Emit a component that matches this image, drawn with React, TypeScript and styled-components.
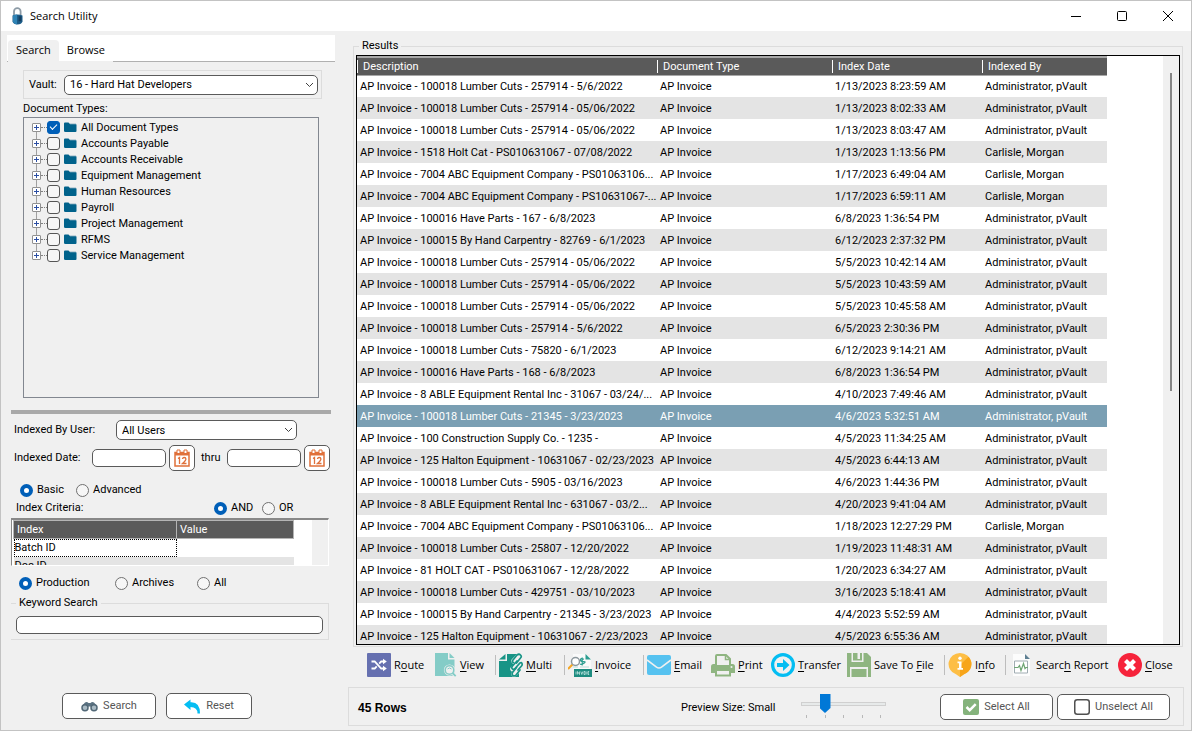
import React from "react";
import styled, { createGlobalStyle, css } from "styled-components";

const GlobalStyle = createGlobalStyle`
  *, *::before, *::after { box-sizing: border-box; }
  body {
    margin: 0;
    background: #f0f0f0;
    color: #000;
    font: 11px/16px Roboto, "Liberation Sans", sans-serif;
  }
  button, input, select { font: inherit; color: inherit; margin: 0; }
`;

const line = "#dcdcdc";
const ink = "#5a5a5a";

const Window = styled.div`
  display: flex;
  flex-direction: column;
  height: 100vh;
  min-height: 600px;
  min-width: 1100px;
  border: 1px solid #c3c3c3;
  background: #f0f0f0;
  overflow: hidden;
`;

const TitleBar = styled.header`
  display: flex;
  align-items: center;
  flex: none;
  height: 30px;
  padding-left: 9px;
  background: #fff;
`;

const Title = styled.h1`
  flex: 1;
  margin: 0 0 0 5px;
  font: 11px/16px "Open Sans", "Noto Sans", sans-serif;
`;

const CaptionButton = styled.button`
  display: grid;
  place-items: center;
  width: 46px;
  height: 30px;
  padding: 0;
  border: 0;
  background: transparent;
`;

const Body = styled.main`
  display: flex;
  flex: 1;
  min-height: 0;
  padding: 4px 7px 4px 6px;
  gap: 13px;
`;

const Sidebar = styled.form`
  display: flex;
  flex-direction: column;
  flex: none;
  width: 328px;
`;

const Tabs = styled.nav`
  display: flex;
  align-items: flex-end;
  flex: none;
  height: 27px;
  padding-left: 1px;
  background: #fff;
  border-bottom: 1px solid #b0b0b0;
`;

const Tab = styled.button<{ $active?: boolean }>`
  height: 22px;
  padding: 0 8px 2px;
  margin-bottom: -1px;
  border: 0;
  border-bottom: 1px solid #f0f0f0;
  border-radius: 4px 4px 0 0;
  background: ${(p) => (p.$active ? "#f0f0f0" : "#fff")};
  font: 11px/16px "Open Sans", "Noto Sans", sans-serif;
`;

const TypesArea = styled.section`
  display: flex;
  flex-direction: column;
  flex: 1;
  min-height: 0;
  padding: 8px 13px 12px 16px;
`;

const VaultBox = styled.div`
  display: flex;
  align-items: center;
  gap: 8px;
  flex: none;
  height: 29px;
  padding: 0 3px 0 5px;
  margin-bottom: 2px;
  border: 1px solid ${line};
`;

const TreeLabel = styled.h2`
  margin: 0;
  font: inherit;
`;

const Tree = styled.ul`
  flex: 1;
  min-height: 0;
  margin: 0 3px 0 0;
  padding: 1px 0 0 8px;
  border: 1px solid #828790;
  list-style: none;
  overflow: hidden;
`;

const TreeRow = styled.li`
  display: flex;
  align-items: center;
  height: 16px;
  background: linear-gradient(#a0a0a0, #a0a0a0) 4px 0 / 1px 100% no-repeat;
  &:first-child { background-position: 4px 8px; }
  &:last-child { background-size: 1px 8px; }
`;

const Expander = styled.button`
  display: grid;
  place-items: center;
  width: 9px;
  height: 9px;
  padding: 0;
  border: 1px solid #919191;
  border-radius: 1px;
  background: #fff;
`;

const Dots = styled.span`
  width: 6px;
  border-top: 1px dotted #808080;
`;

const TreeItemLabel = styled.label`
  display: flex;
  align-items: center;
  gap: 4px;
  height: 16px;
`;

const TreeText = styled.span`
  padding-top: 2px;
`;

const Check = styled.input`
  appearance: none;
  display: grid;
  place-items: center;
  width: 13px;
  height: 13px;
  border: 1px solid #555;
  border-radius: 3px;
  background: #f6f6f6;
  &:checked { background: #005fb8; border-color: #005fb8; }
  &:checked::after {
    content: "";
    width: 7px;
    height: 4px;
    border: solid #fff;
    border-width: 0 0 1px 1px;
    transform: translateY(-1px) rotate(-45deg);
  }
`;

const Splitter = styled.hr`
  flex: none;
  width: 320px;
  height: 4px;
  margin: 0 0 6px 4px;
  border: 0;
  background: #a9a9a9;
`;

const Filters = styled.section`
  display: flex;
  flex-direction: column;
  flex: none;
  padding: 0 6px 0 4px;
`;

const FieldRow = styled.div<{ $gap?: number }>`
  display: flex;
  align-items: center;
  padding-left: 3px;
  margin-bottom: ${(p) => p.$gap ?? 0}px;
`;

const FieldLabel = styled.label<{ $w?: number }>`
  flex: none;
  width: ${(p) => (p.$w ? p.$w + "px" : "auto")};
  white-space: nowrap;
`;

const SelectWrap = styled.span<{ $w?: number }>`
  display: grid;
  align-items: center;
  ${(p) => (p.$w ? css`width: ${p.$w}px;` : css`flex: 1;`)}
  & > * { grid-area: 1 / 1; }
  & > svg { justify-self: end; margin-right: 4px; pointer-events: none; }
`;

const Select = styled.select`
  appearance: none;
  width: 100%;
  height: 20px;
  padding: 1px 16px 0 5px;
  border: 1px solid ${ink};
  border-radius: 5px;
  background: #fff;
`;

const TextBox = styled.input<{ $w?: number }>`
  display: block;
  flex: none;
  width: ${(p) => (p.$w ? p.$w + "px" : "100%")};
  height: 18px;
  padding: 0 5px;
  border: 1px solid ${ink};
  border-radius: 5px;
  background: #fff;
`;

const DateButton = styled.button`
  display: grid;
  place-items: center;
  flex: none;
  width: 26px;
  height: 26px;
  margin-left: 3px;
  padding: 0;
  border: 1px solid ${ink};
  border-radius: 5px;
  background: #fff;
`;

const Thru = styled.span`
  flex: none;
  width: 32px;
  padding-left: 6px;
`;

const RadioLabel = styled.label<{ $w?: number }>`
  display: flex;
  align-items: center;
  gap: 4px;
  flex: none;
  width: ${(p) => (p.$w ? p.$w + "px" : "auto")};
`;

const Radio = styled.input`
  appearance: none;
  width: 13px;
  height: 13px;
  border: 1px solid #707070;
  border-radius: 50%;
  background: #f6f6f6;
  &:checked { border: 4px solid #005fb8; background: #fff; }
`;

const RadioRow = styled.div<{ $indent: number; $gap: number }>`
  display: flex;
  align-items: center;
  height: 16px;
  padding-left: ${(p) => p.$indent}px;
  margin-bottom: ${(p) => p.$gap}px;
`;

const Criteria = styled.div`
  display: flex;
  height: 48px;
  margin-bottom: 9px;
  padding: 0 0 0 1px;
  border: 1px solid #fff;
  border-top: 2px solid #888;
  border-left-color: #888;
  background: #fff;
  overflow: hidden;
`;

const CriteriaTable = styled.table`
  align-self: flex-start;
  width: 281px;
  flex: none;
  table-layout: fixed;
  border-collapse: collapse;
  th {
    height: 18px;
    padding: 0 3px;
    background: ${ink};
    color: #fff;
    border: 1px solid #b4b4b4;
    font-weight: normal;
    text-align: left;
    line-height: 16px;
  }
  td { height: 18px; padding: 0 1px; }
  tr:nth-child(even) td { background: #e4e4e4; }
  td.focused { outline: 1px dotted #000; outline-offset: -1px; }
`;

const CriteriaTrack = styled.div`
  width: 16px;
  margin-left: auto;
  background: #f0f0f0;
`;

const GroupBox = styled.fieldset`
  min-width: 0;
  margin: 0;
  border: 1px solid ${line};
  legend {
    padding: 0 3px;
    line-height: 14px;
  }
`;

const KeywordBox = styled(GroupBox)`
  height: 44px;
  padding: 6px 5px 0;
  border-left: 0;
`;

const FormButtons = styled.div`
  display: flex;
  flex: none;
  gap: 10px;
  margin: 53px 0 7px 55px;
`;

const Button = styled.button<{ $w: number }>`
  display: flex;
  align-items: center;
  justify-content: center;
  gap: 5px;
  width: ${(p) => p.$w}px;
  height: 26px;
  padding: 0;
  border: 1px solid ${ink};
  border-radius: 5px;
  background: #fff;
  color: #555;
  line-height: 18px;
`;

const Content = styled.section`
  display: flex;
  flex-direction: column;
  flex: 1;
  min-width: 0;
`;

const ResultsBox = styled(GroupBox)`
  display: flex;
  flex: 1;
  min-height: 0;
  margin: 4px 1px 0 5px;
  padding: 2px 2px 1px;
  legend { margin-left: 3px; }
`;

const ResultsFrame = styled.div`
  display: flex;
  flex: 1;
  height: 100%;
  min-height: 0;
  border: 1px solid #000;
  background: #fff;
  overflow: hidden;
`;

const ResultsScroll = styled.div`
  flex: 1;
  min-width: 0;
  overflow: hidden;
`;

const ResultsTable = styled.table`
  width: 750px;
  table-layout: fixed;
  border-collapse: collapse;
  th {
    height: 18px;
    padding: 0;
    border-top: 2px solid #a8a8a8;
    border-bottom: 1px solid #a8a8a8;
    background: ${ink};
    color: #fff;
    font-weight: normal;
    text-align: left;
    line-height: 13px;
  }
  th span {
    display: block;
    padding-left: 5px;
    border-left: 1px solid #fff;
  }
  td {
    height: 22px;
    padding: 2px 0 0 3px;
    white-space: nowrap;
    overflow: hidden;
  }
`;

const ResultRow = styled.tr<{ $selected?: boolean }>`
  &:nth-child(even) { background: #e4e4e4; }
  ${(p) => p.$selected && css`&&& { background: #7a9fb3; color: #fff; }`}
`;

const ScrollTrack = styled.div`
  flex: none;
  width: 16px;
  padding: 17px 0 0 7px;
  background: #f0f0f0;
`;

const ScrollThumb = styled.div`
  width: 2px;
  height: 318px;
  background: #858585;
`;

const Toolbar = styled.div`
  display: flex;
  flex: none;
  align-items: center;
  height: 24px;
  margin: 6px 0 10px;
  padding-left: 19px;
`;

const Tool = styled.button<{ $w: number; $gap?: number }>`
  display: flex;
  align-items: center;
  gap: ${(p) => p.$gap ?? 3}px;
  flex: none;
  width: ${(p) => p.$w}px;
  height: 24px;
  padding: 0;
  border: 0;
  background: transparent;
  font: 11px/16px "Open Sans", "Noto Sans", sans-serif;
  white-space: nowrap;
  u { text-underline-offset: 2px; }
`;

const Separator = styled.span`
  width: 1px;
  height: 20px;
  margin-right: 3px;
  background: #bdbdbd;
`;

const StatusBar = styled.footer`
  display: flex;
  flex: none;
  align-items: center;
  height: 39px;
  padding: 0 13px 0 9px;
  border: 1px solid ${line};
`;

const RowCount = styled.strong`
  width: 323px;
  padding-top: 2px;
  font: bold 12px/16px "Liberation Sans", Arial, sans-serif;
`;

const PreviewLabel = styled.label`
  width: 120px;
  padding-top: 2px;
`;

const SliderBox = styled.div`
  width: 85px;
  height: 26px;
`;

const Slider = styled.input`
  appearance: none;
  display: block;
  width: 85px;
  height: 20px;
  background: linear-gradient(#e7eaea, #e7eaea) 1px 9px / 83px 2px no-repeat,
    linear-gradient(#d0d0d0, #d0d0d0) 0 8px / 85px 4px no-repeat;
  &::-webkit-slider-thumb {
    appearance: none;
    width: 11px;
    height: 19px;
    background: #0078d7;
    clip-path: polygon(0 0, 100% 0, 100% 74%, 50% 100%, 0 74%);
  }
`;

const Ticks = styled.div`
  display: flex;
  justify-content: space-between;
  padding: 0 5px;
  margin-top: 1px;
  span { width: 1px; height: 3px; background: #b8b8b8; }
`;

const StatusButtons = styled.div`
  display: flex;
  gap: 4px;
  margin-left: auto;
`;

const Chevron = () => (
  <svg width="9" height="6" viewBox="0 0 9 6" fill="none" stroke="#404040">
    <path d="M1 1l3.5 3.5L8 1" />
  </svg>
);

const LockIcon = () => (
  <svg width="15" height="18" viewBox="0 0 15 18">
    <path d="M4 9V4.5a3.3 3.3 0 0 1 6.6 0V9" fill="none" stroke="#8d9ba6" strokeWidth="1.8" />
    <path d="M2.5 8.5q5-2 10 0v6q-1 3-5 3t-5-3z" fill="#1d5c88" />
    <path d="M3 8.6q2-1 4-1v9.8q-3 0-4-2.4z" fill="#2f83b5" />
    <path d="M8.6 9.2h2.8v5H8.6z" fill="#143f61" />
  </svg>
);

const PlusIcon = () => (
  <svg width="5" height="5" viewBox="0 0 5 5" stroke="#2b4ea3">
    <path d="M0 2.5h5M2.5 0v5" />
  </svg>
);

const FolderIcon = () => (
  <svg width="13" height="11" viewBox="0 0 13 11">
    <path d="M0 1.5Q0 .5 1 .5h3.500L6 2h5.500q1 0 1 1v6q0 1-1 1h-10q-1.500 0-1.500-1z" fill="#00628b" />
    <path d="M6 2h6" stroke="#7ba5b9" strokeWidth=".8" />
  </svg>
);

const CalendarIcon = () => (
  <svg width="16" height="18" viewBox="0 0 16 18">
    <path d="M1 3.500h14v13.500H1z" fill="#fff" stroke="#e0703a" strokeWidth="1.500" />
    <path d="M1 3h14v3.500H1z" fill="#e0703a" />
    <path d="M3 1h3v3.500H3zM10 1h3v3.500h-3z" fill="#fff" stroke="#e0703a" />
    <path d="M4 9.500l1.500-1V15M8.500 10q0-1.500 1.700-1.500t1.700 1.500-3.400 4.500H12.500" fill="none" stroke="#e0703a" strokeWidth="1.300" />
  </svg>
);

const BinocularsIcon = () => (
  <svg width="17" height="11" viewBox="0 0 17 11">
    <path d="M1 5L4 1.500q2-1 3.500.5h2q1.500-1.500 3.500-.5L16 5l-4 2.500-2.500-2h-2l-2.500 2z" fill="#5b7282" />
    <circle cx="4" cy="6.800" r="3" fill="#a9bac4" stroke="#526877" strokeWidth="1.500" />
    <circle cx="13" cy="6.800" r="3" fill="#a9bac4" stroke="#526877" strokeWidth="1.500" />
  </svg>
);

const ResetIcon = () => (
  <svg width="17" height="15" viewBox="0 0 17 15">
    <path d="M0 5.500L6.500.5v2.700Q16 2.500 16 14.500h-2.500Q13.500 8 6.500 8v3z" fill="#04bdf2" />
  </svg>
);

const RouteIcon = () => (
  <svg width="24" height="24" viewBox="0 0 24 24">
    <rect width="24" height="24" rx="1" fill="#6670b0" />
    <g fill="none" stroke="#fff" strokeWidth="1.800">
      <path d="M4.500 8.500h3.200l6.500 7H17M4.500 15.500h3.200l2-2.200M12.200 10.600l2-2.100H17" />
    </g>
    <path d="M16 5.800l3.800 2.700L16 11.200zM16 12.800l3.800 2.700-3.800 2.700z" fill="#fff" />
  </svg>
);

const ViewIcon = () => (
  <svg width="24" height="24" viewBox="0 0 24 24">
    <path d="M0 0h13v6.500h6.500V23H0z" fill="#84ccc7" />
    <path d="M14.500 0L19.500 5h-5z" fill="#84ccc7" />
    <circle cx="14.500" cy="17" r="5.600" fill="#f0f0f0" />
    <path d="M17 19.500l3.500 3.500" stroke="#f0f0f0" strokeWidth="3.500" />
    <circle cx="14.500" cy="17" r="4.300" fill="none" stroke="#84ccc7" strokeWidth="1.600" />
    <path d="M17.500 20l3.200 3.200" stroke="#84ccc7" strokeWidth="1.800" />
    <path d="M12.500 16q2-2 4 0" fill="none" stroke="#84ccc7" />
  </svg>
);

const MultiIcon = () => (
  <svg width="24" height="24" viewBox="0 0 24 24">
    <path d="M8 1h12v23H0V8h8z" fill="#189486" />
    <path d="M6.500 1v5.500H0z" fill="#189486" />
    <path d="M20 3l-5 5M20 10l-6 6M20 16l-5 5" stroke="#f0f0f0" strokeWidth="5.500" strokeLinecap="round" />
    <g fill="none" stroke="#189486" strokeWidth="1.700" strokeLinecap="round">
      <path d="M14.500 9.500q-2-.5-.5-2.500l4-5q2-1.500 3.500 0t0 3l-4 5" />
      <path d="M18 8l-4.500 5q-1.500 2 0 3t3-1l4.500-5q1.500-1 2 .5t-.5 2.500l-3.500 4" />
      <path d="M17.500 14.500l-4 5q-1 2 .5 3t3-.5l4-5" />
    </g>
  </svg>
);

const InvoiceIcon = () => (
  <svg width="24" height="24" viewBox="0 0 24 24">
    <path d="M5 1h12l6 5v10H5z" fill="#fafafa" />
    <path d="M17.500 1L23 6.500h-5.500z" fill="#2c9d90" />
    <path d="M6 16h18v8H6z" fill="#1d8c80" />
    <path d="M8 18.500v3M9.500 21.500v-3l2 3v-3M12.800 18.500l1 3 1-3M16 18.500v3h1.200v-3zM18.800 18.500v3M20 18.500v3h1.200M20 18.500h1.200M20 20h1" stroke="#d6efec" strokeWidth=".7" fill="none" />
    <path d="M4.500 11.500L0 16" stroke="#f5a623" strokeWidth="2" />
    <circle cx="7.500" cy="8.500" r="4" fill="#fff" stroke="#8c979d" strokeWidth="1.500" />
    <path d="M16 6.200q-3.500-1.500-3.500.5t3.300 2-2 2.700q-1 0-1.700-.5M14.200 4.500v8" fill="none" stroke="#2c9d90" strokeWidth="1.200" />
    <path d="M5 14h5M12 14h9" stroke="#b6dcd8" />
  </svg>
);

const EmailIcon = () => (
  <svg width="24" height="24" viewBox="0 0 24 24">
    <rect y="2" width="24" height="20" rx="2" fill="#56c2f0" />
    <path d="M0 7l9.500 7.200q2.500 1.700 5 0L24 7" fill="none" stroke="#f0f0f0" strokeWidth="1.600" />
  </svg>
);

const PrintIcon = () => (
  <svg width="24" height="24" viewBox="0 0 24 24">
    <path d="M2.500 11h19q2.500 0 2.500 2.500V20H0v-6.500Q0 11 2.500 11z" fill="#8fb581" />
    <path d="M5 12V3q0-1 1-1h9l4 4v6" fill="#f0f0f0" stroke="#8fb581" strokeWidth="2" />
    <path d="M14.500 2v4.500H19" fill="none" stroke="#8fb581" strokeWidth="1.500" />
    <path d="M5 17h14v5.500H5z" fill="#f0f0f0" stroke="#8fb581" strokeWidth="2" />
    <circle cx="20.500" cy="14" r="1" fill="#f0f0f0" />
  </svg>
);

const TransferIcon = () => (
  <svg width="24" height="24" viewBox="0 0 24 24">
    <circle cx="12" cy="12" r="10.400" fill="#f0f0f0" stroke="#04bdf2" strokeWidth="3.200" />
    <path d="M6 10h6V6l6.500 6-6.500 6v-4H6z" fill="#04bdf2" />
  </svg>
);

const SaveIcon = () => (
  <svg width="24" height="24" viewBox="0 0 24 24">
    <path d="M0 0h20l4 4v20H0z" fill="#8fb581" />
    <path d="M4.500 0h12v9h-12z" fill="#f0f0f0" />
    <path d="M6 0h9v7.500H6z" fill="#8fb581" />
    <path d="M10.500 0H13v6h-2.500z" fill="#f0f0f0" />
    <path d="M3 14h18v10H3z" fill="#f0f0f0" />
    <path d="M4.500 16h15v8h-15z" fill="#8fb581" />
  </svg>
);

const InfoIcon = () => (
  <svg width="24" height="24" viewBox="0 0 24 24">
    <path d="M12 0a11.500 11 0 0 1 4 21.300L12 24l-4-2.700A11.500 11 0 0 1 12 0z" fill="#fdbe45" />
    <path d="M12 12L20.500 3.700A11.500 11 0 0 1 16 21.300L12 24z" fill="#f7a51b" />
    <circle cx="12" cy="5.200" r="1.700" fill="#fff" />
    <path d="M9.500 8.500h4V15h1.500v1.800H9.500V15H11v-4.700H9.500z" fill="#fff" />
  </svg>
);

const ReportIcon = () => (
  <svg width="24" height="24" viewBox="0 0 24 24">
    <path d="M4 1h12l5 5v17H4z" fill="#fcfcfc" />
    <path d="M16 1l5 5h-5z" fill="#5e7f92" />
    <path d="M5.500 8h13v12h-13z" fill="#fff" stroke="#a0acb2" />
    <path d="M5 14.500h4l1.500-2 1.500 5 2.500-7 1.500 5 1-1h2" fill="none" stroke="#6fa574" strokeWidth="1.200" />
  </svg>
);

const CloseIcon = () => (
  <svg width="24" height="24" viewBox="0 0 24 24">
    <circle cx="12" cy="12" r="12" fill="#f6233b" />
    <path d="M7.500 7.500l9 9M16.500 7.500l-9 9" stroke="#fff" strokeWidth="4.200" />
  </svg>
);

const CheckedIcon = () => (
  <svg width="16" height="16" viewBox="0 0 16 16">
    <rect width="16" height="16" rx="2" fill="#85b37c" />
    <path d="M3.500 8l3.200 3.200 6-6" fill="none" stroke="#fff" strokeWidth="2.500" />
  </svg>
);

const UncheckedIcon = () => (
  <svg width="16" height="16" viewBox="0 0 16 16">
    <rect x=".75" y=".75" width="14.500" height="14.500" rx="2.500" fill="#fff" stroke="#505050" strokeWidth="1.500" />
  </svg>
);

const docTypes = [
  "All Document Types",
  "Accounts Payable",
  "Accounts Receivable",
  "Equipment Management",
  "Human Resources",
  "Payroll",
  "Project Management",
  "RFMS",
  "Service Management",
];

const admin = "Administrator, pVault";
const carlisle = "Carlisle, Morgan";

const results: [string, string, string][] = [
  ["100018 Lumber Cuts - 257914 - 5/6/2022", "1/13/2023 8:23:59 AM", admin],
  ["100018 Lumber Cuts - 257914 - 05/06/2022", "1/13/2023 8:02:33 AM", admin],
  ["100018 Lumber Cuts - 257914 - 05/06/2022", "1/13/2023 8:03:47 AM", admin],
  ["1518 Holt Cat - PS010631067 - 07/08/2022", "1/13/2023 1:13:56 PM", carlisle],
  ["7004 ABC Equipment Company - PS01063106...", "1/17/2023 6:49:04 AM", carlisle],
  ["7004 ABC Equipment Company - PS10631067-...", "1/17/2023 6:59:11 AM", carlisle],
  ["100016 Have Parts - 167 - 6/8/2023", "6/8/2023 1:36:54 PM", admin],
  ["100015 By Hand Carpentry - 82769 - 6/1/2023", "6/12/2023 2:37:32 PM", admin],
  ["100018 Lumber Cuts - 257914 - 05/06/2022", "5/5/2023 10:42:14 AM", admin],
  ["100018 Lumber Cuts - 257914 - 05/06/2022", "5/5/2023 10:43:59 AM", admin],
  ["100018 Lumber Cuts - 257914 - 05/06/2022", "5/5/2023 10:45:58 AM", admin],
  ["100018 Lumber Cuts - 257914 - 5/6/2022", "6/5/2023 2:30:36 PM", admin],
  ["100018 Lumber Cuts - 75820 - 6/1/2023", "6/12/2023 9:14:21 AM", admin],
  ["100016 Have Parts - 168 - 6/8/2023", "6/8/2023 1:36:54 PM", admin],
  ["8 ABLE Equipment Rental Inc - 31067 - 03/24/...", "4/10/2023 7:49:46 AM", admin],
  ["100018 Lumber Cuts - 21345 - 3/23/2023", "4/6/2023 5:32:51 AM", admin],
  ["100 Construction Supply Co. - 1235 -", "4/5/2023 11:34:25 AM", admin],
  ["125 Halton Equipment - 10631067 - 02/23/2023", "4/5/2023 6:44:13 AM", admin],
  ["100018 Lumber Cuts - 5905 - 03/16/2023", "4/6/2023 1:44:36 PM", admin],
  ["8 ABLE Equipment Rental Inc - 631067 - 03/2...", "4/20/2023 9:41:04 AM", admin],
  ["7004 ABC Equipment Company - PS01063106...", "1/18/2023 12:27:29 PM", carlisle],
  ["100018 Lumber Cuts - 25807 - 12/20/2022", "1/19/2023 11:48:31 AM", admin],
  ["81 HOLT CAT - PS010631067 - 12/28/2022", "1/20/2023 6:34:27 AM", admin],
  ["100018 Lumber Cuts - 429751 - 03/10/2023", "3/16/2023 5:18:41 AM", admin],
  ["100015 By Hand Carpentry - 21345 - 3/23/2023", "4/4/2023 5:52:59 AM", admin],
  ["125 Halton Equipment - 10631067 - 2/23/2023", "4/5/2023 6:55:36 AM", admin],
];

const selectedRow = 15;

export default function App() {
  return (
    <>
      <GlobalStyle />
      <Window>
        <TitleBar>
          <LockIcon />
          <Title>Search Utility</Title>
          <CaptionButton aria-label="Minimize">
            <svg width="10" height="10" stroke="#000"><path d="M0 5.500h10" /></svg>
          </CaptionButton>
          <CaptionButton aria-label="Maximize">
            <svg width="10" height="10" stroke="#000" fill="none"><rect x=".5" y=".5" width="9" height="9" rx="1" /></svg>
          </CaptionButton>
          <CaptionButton aria-label="Close window">
            <svg width="10" height="10" stroke="#000"><path d="M0 0l10 10M10 0L0 10" /></svg>
          </CaptionButton>
        </TitleBar>
        <Body>
          <Sidebar onSubmit={(e) => e.preventDefault()}>
            <Tabs>
              <Tab type="button" $active>Search</Tab>
              <Tab type="button">Browse</Tab>
            </Tabs>
            <TypesArea>
              <VaultBox>
                <FieldLabel htmlFor="vault" $w={27}>Vault:</FieldLabel>
                <SelectWrap>
                  <Select id="vault"><option>16 - Hard Hat Developers</option></Select>
                  <Chevron />
                </SelectWrap>
              </VaultBox>
              <TreeLabel>Document Types:</TreeLabel>
              <Tree>
                {docTypes.map((name, i) => (
                  <TreeRow key={name}>
                    <Expander type="button" aria-label={`Expand ${name}`}><PlusIcon /></Expander>
                    <Dots />
                    <TreeItemLabel>
                      <Check type="checkbox" defaultChecked={i === 0} />
                      <FolderIcon />
                      <TreeText>{name}</TreeText>
                    </TreeItemLabel>
                  </TreeRow>
                ))}
              </Tree>
            </TypesArea>
            <Splitter />
            <Filters>
              <FieldRow $gap={5}>
                <FieldLabel htmlFor="user" $w={102}>Indexed By User:</FieldLabel>
                <SelectWrap $w={181}>
                  <Select id="user"><option>All Users</option></Select>
                  <Chevron />
                </SelectWrap>
              </FieldRow>
              <FieldRow $gap={11}>
                <FieldLabel htmlFor="from" $w={78}>Indexed Date:</FieldLabel>
                <TextBox id="from" $w={74} />
                <DateButton type="button" aria-label="Pick start date"><CalendarIcon /></DateButton>
                <Thru>thru</Thru>
                <TextBox aria-label="End date" $w={74} />
                <DateButton type="button" aria-label="Pick end date"><CalendarIcon /></DateButton>
              </FieldRow>
              <RadioRow $indent={9} $gap={2}>
                <RadioLabel $w={56}><Radio type="radio" name="mode" defaultChecked />Basic</RadioLabel>
                <RadioLabel><Radio type="radio" name="mode" />Advanced</RadioLabel>
              </RadioRow>
              <RadioRow $indent={5} $gap={2}>
                <FieldLabel as="span" $w={198}>Index Criteria:</FieldLabel>
                <RadioLabel $w={48}><Radio type="radio" name="join" defaultChecked />AND</RadioLabel>
                <RadioLabel><Radio type="radio" name="join" />OR</RadioLabel>
              </RadioRow>
              <Criteria>
                <CriteriaTable>
                  <colgroup><col style={{ width: 163 }} /><col /></colgroup>
                  <thead><tr><th>Index</th><th>Value</th></tr></thead>
                  <tbody>
                    <tr><td className="focused">Batch ID</td><td /></tr>
                    <tr><td>Doc ID</td><td /></tr>
                  </tbody>
                </CriteriaTable>
                <CriteriaTrack />
              </Criteria>
              <RadioRow $indent={8} $gap={5}>
                <RadioLabel $w={96}><Radio type="radio" name="store" defaultChecked />Production</RadioLabel>
                <RadioLabel $w={82}><Radio type="radio" name="store" />Archives</RadioLabel>
                <RadioLabel><Radio type="radio" name="store" />All</RadioLabel>
              </RadioRow>
              <KeywordBox>
                <legend>Keyword Search</legend>
                <TextBox aria-label="Keyword Search" />
              </KeywordBox>
            </Filters>
            <FormButtons>
              <Button $w={94} type="submit"><BinocularsIcon />Search</Button>
              <Button $w={86} type="reset"><ResetIcon />Reset</Button>
            </FormButtons>
          </Sidebar>

          <Content>
            <ResultsBox>
              <legend>Results</legend>
              <ResultsFrame>
                <ResultsScroll>
                  <ResultsTable>
                    <colgroup>
                      <col style={{ width: 300 }} />
                      <col style={{ width: 175 }} />
                      <col style={{ width: 150 }} />
                      <col />
                    </colgroup>
                    <thead>
                      <tr>
                        <th><span>Description</span></th>
                        <th><span>Document Type</span></th>
                        <th><span>Index Date</span></th>
                        <th><span>Indexed By</span></th>
                      </tr>
                    </thead>
                    <tbody>
                      {results.map(([description, date, by], i) => (
                        <ResultRow key={i} $selected={i === selectedRow}>
                          <td>AP Invoice - {description}</td>
                          <td>AP Invoice</td>
                          <td>{date}</td>
                          <td>{by}</td>
                        </ResultRow>
                      ))}
                    </tbody>
                  </ResultsTable>
                </ResultsScroll>
                <ScrollTrack><ScrollThumb /></ScrollTrack>
              </ResultsFrame>
            </ResultsBox>

            <Toolbar>
              <Tool $w={68}><RouteIcon /><span>R<u>o</u>ute</span></Tool>
              <Tool $w={60} $gap={1}><ViewIcon /><span><u>V</u>iew</span></Tool>
              <Separator />
              <Tool $w={65}><MultiIcon /><span><u>M</u>ulti</span></Tool>
              <Separator />
              <Tool $w={75}><InvoiceIcon /><span><u>I</u>nvoice</span></Tool>
              <Separator />
              <Tool $w={64}><EmailIcon /><span><u>E</u>mail</span></Tool>
              <Tool $w={60}><PrintIcon /><span><u>P</u>rint</span></Tool>
              <Tool $w={76}><TransferIcon /><span><u>T</u>ransfer</span></Tool>
              <Tool $w={97}><SaveIcon /><span>Save To <u>F</u>ile</span></Tool>
              <Separator />
              <Tool $w={57}><InfoIcon /><span>I<u>n</u>fo</span></Tool>
              <Separator />
              <Tool $w={109}><ReportIcon /><span>Searc<u>h</u> Report</span></Tool>
              <Tool $w={60}><CloseIcon /><span><u>C</u>lose</span></Tool>
            </Toolbar>

            <StatusBar>
              <RowCount>45 Rows</RowCount>
              <PreviewLabel htmlFor="preview">Preview Size: Small</PreviewLabel>
              <SliderBox>
                <Slider id="preview" type="range" min={0} max={4} defaultValue={1} />
                <Ticks><span /><span /><span /><span /><span /></Ticks>
              </SliderBox>
              <StatusButtons>
                <Button $w={113}><CheckedIcon />Select All</Button>
                <Button $w={113}><UncheckedIcon />Unselect All</Button>
              </StatusButtons>
            </StatusBar>
          </Content>
        </Body>
      </Window>
    </>
  );
}
